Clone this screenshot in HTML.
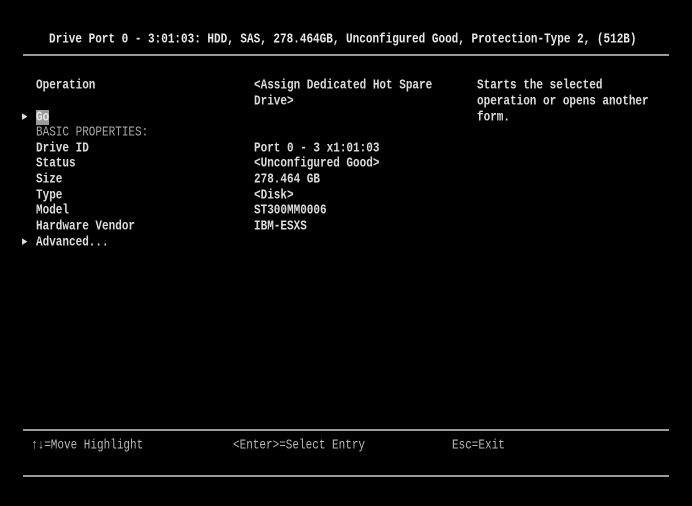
<!DOCTYPE html>
<html><head><meta charset="utf-8"><style>
html,body{margin:0;padding:0;background:#000;}
body{width:692px;height:506px;position:relative;overflow:hidden;font-family:"Liberation Mono","DejaVu Sans Mono",monospace;font-size:11px;font-weight:bold;color:#dcdcdc;}
.t{position:absolute;white-space:pre;line-height:14px;transform:scaleY(1.25);transform-origin:0 50%;}
.l{position:absolute;height:2px;background:#9a9a9a;}
.g{color:#a8a8a8;font-weight:normal;}
.f{color:#b8b8b8;font-weight:normal;}
</style></head><body>
<div class="t" style="left:49px;top:33px;color:#e8e8e8">Drive Port 0 - 3:01:03: HDD, SAS, 278.464GB, Unconfigured Good, Protection-Type 2, (512B)</div>
<div class="l" style="left:23px;top:54px;width:646px"></div>

<div class="t" style="left:36px;top:79px">Operation</div>
<div class="t" style="left:254px;top:79px">&lt;Assign Dedicated Hot Spare</div>
<div class="t" style="left:254px;top:95px">Drive&gt;</div>
<div class="t" style="left:477px;top:79px">Starts the selected</div>
<div class="t" style="left:477px;top:95px">operation or opens another</div>
<div class="t" style="left:477px;top:111px">form.</div>

<div class="t" style="left:22px;top:110px;font-size:9px">&#9654;</div>
<div style="position:absolute;left:36px;top:110px;width:13px;height:15px;background:#9a9a9a"></div>
<div class="t" style="left:36px;top:111px;color:#e8e8e8">Go</div>
<div class="t g" style="left:36px;top:126px">BASIC PROPERTIES:</div>
<div class="t" style="left:36px;top:142px">Drive ID</div>
<div class="t" style="left:36px;top:157px">Status</div>
<div class="t" style="left:36px;top:173px">Size</div>
<div class="t" style="left:36px;top:189px">Type</div>
<div class="t" style="left:36px;top:204px">Model</div>
<div class="t" style="left:36px;top:220px">Hardware Vendor</div>
<div class="t" style="left:22px;top:235px;font-size:9px">&#9654;</div>
<div class="t" style="left:36px;top:236px">Advanced...</div>

<div class="t" style="left:254px;top:142px">Port 0 - 3 x1:01:03</div>
<div class="t" style="left:254px;top:157px">&lt;Unconfigured Good&gt;</div>
<div class="t" style="left:254px;top:173px">278.464 GB</div>
<div class="t" style="left:254px;top:189px">&lt;Disk&gt;</div>
<div class="t" style="left:254px;top:204px">ST300MM0006</div>
<div class="t" style="left:254px;top:220px">IBM-ESXS</div>

<div class="l" style="left:23px;top:429px;width:646px"></div>
<div class="t f" style="left:31px;top:439px">↑↓=Move Highlight</div>
<div class="t f" style="left:233px;top:439px">&lt;Enter&gt;=Select Entry</div>
<div class="t f" style="left:452px;top:439px">Esc=Exit</div>
<div class="l" style="left:23px;top:475px;width:646px"></div>
</body></html>
